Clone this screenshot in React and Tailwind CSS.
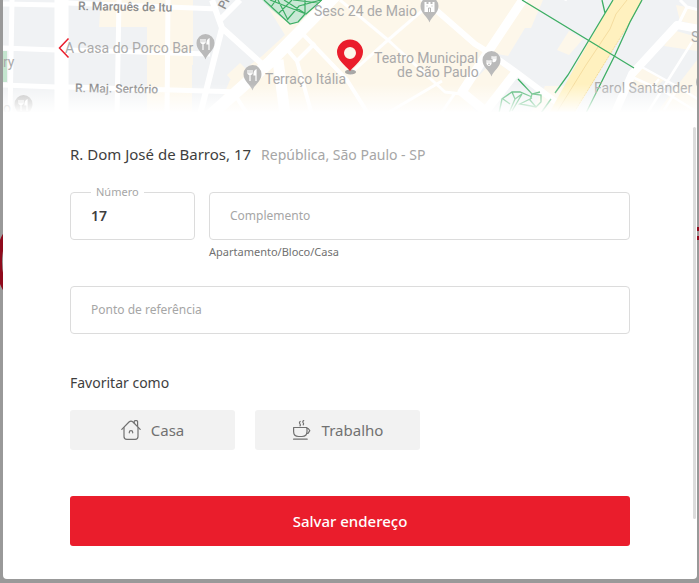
import { useState } from "react";

function PlacePin({ x, y, children }) {
  return (
    <g transform={`translate(${x} ${y})`}>
      <path d="M0 15.500C-1.500 10 -9 6.500 -9 -1A9 9 0 0 1 9 -1C9 6.500 1.500 10 0 15.500Z" fill="#bababa" />
      {children}
    </g>
  );
}

function Cutlery() {
  return (
    <g fill="none" stroke="#fff">
      <path d="M-4.500 -5v3.500q2 2 4 0V-5M-2.500 -5V6" strokeWidth="1.200" />
      <path d="M3.500 6V-5q-2 1 -2 5h2" fill="#fff" strokeWidth="1.200" />
    </g>
  );
}

function StreetMap() {
  return (
    <svg
      viewBox="3 0 694 115"
      preserveAspectRatio="xMidYMin slice"
      className="block h-[115px] w-full"
      role="img"
      aria-label="Mapa"
    >
      <defs>
        <linearGradient id="fade" x1="0" y1="0" x2="0" y2="1">
          <stop offset="0" stopColor="#fff" stopOpacity="0" />
          <stop offset="1" stopColor="#fff" />
        </linearGradient>
      </defs>
      <rect x="3" width="694" height="115" fill="#f0f2f4" />
      <path d="M3 51h4v31H3z" fill="#c4e5cf" />
      <g fill="#fdf7ea">
        <path d="M101 0H193V65h-1V115H147V27H99z" />
        <path d="M265 0H523L461 92L478 115H215L230 80L262 56L285 35L266 4z" />
        <path d="M227 75L240 63L246 69L232 81z" />
        <path d="M523 0H543L531 28L525 28L508 56L487 52z" />
        <path d="M494 60L512 73L484 107L463 92z" />
        <path d="M569 31L583 39L569 55L557 50z" />
        <path d="M530 115L545 86H590L575 115z" />
        <path d="M673 30L697 37V51L664 46z" />
        <path d="M638 66L664 80L650 92L630 85z" />
        <path d="M697 60V115H655L670 95z" />
        <path d="M676 5L697 9V25L680 21z" />
      </g>
      <path d="M262 0H322L298 23L290 24L272 10z" fill="#c9e8d5" />
      <g fill="none" stroke="#3dae64" strokeWidth="1.200">
        <path d="M264 0L290 24L298 22M271 7L276 0M279 13L292 0M287 20L299 6L321 0M270 0L306 14M284 0L306 14L322 0M305 0V14L298 22M293 0L319 3M278 0L288 20" />
      </g>
      <g fill="none" stroke="#fff" strokeLinejoin="round">
        <path d="M61.500 0V115" strokeWidth="14" />
        <path d="M12 0L10 115" strokeWidth="5" />
        <path d="M3 4L56 5M3 48L56 50M3 85L56 87" strokeWidth="5" />
        <path d="M68 3L218 9M68 50L210 54M68 87L240 92M119 0L117 115M168 0L167 115" strokeWidth="5" />
        <path d="M212 0L222 28L200 115M222 28L262 64M220 20L240 0" strokeWidth="6" />
        <path d="M205 120L270 62L335 -4" strokeWidth="12" />
        <path d="M278 60L285 115" strokeWidth="11" />
        <path d="M284 46L297 61L312 115M297 61L315 43M300 31L347 80L369 115M237 98L248 115" strokeWidth="4" />
        <path d="M340 0L388 40L445 92L461 94M430 4L388 40L350 74M384 115L442 81M455 93L440 115" strokeWidth="3" />
        <path d="M420 -4L475 44L488 52L516 72L560 105" strokeWidth="6" />
        <path d="M526 -5L488 52L462 92L484 110M516 72L484 113" strokeWidth="9" />
        <path d="M699 29L677 25L632 74L614 115" strokeWidth="8" />
        <path d="M678 25L687 7L680 0M687 7L699 10M555 -6L567 0" strokeWidth="3" />
        <path d="M640 66L680 88L699 100M630 76L665 92L697 112M692 42L660 93L648 112M659 79L650 90M678 88L664 110" strokeWidth="2.500" />
      </g>
      <path d="M613 0H642L630 22L573 115H548L590 40z" fill="#fff1bf" />
      <path d="M627 0L616 14L610 29L586 65L555 115" fill="none" stroke="#f5dda0" />
      <path d="M641 2L630 22L573 114" fill="none" stroke="#f3dc9b" strokeDasharray="2 1" />
      <g fill="none" stroke="#3dae64" strokeWidth="1.300">
        <path d="M522 0L634 68M613 0L589 40L568 75L555 93M602 0L605 13M642 0L630 22L615 55L586 113M551 99L541 113" />
        <path d="M518 79L532 94L541 95V102L536 107L530 100L532 94L540 92M532 97L520 92L512 92L502 99L499 113M512 92L515 99L522 94M515 99L509 113M522 94L512 111M503 99L510 104M532 98L520 104L536 107" />
      </g>
      <g fontFamily="Roboto, sans-serif" fontSize="14" fill="#aaa">
        <g fontWeight="500" fontSize="12" fill="#8c8c8c">
          <text x="78" y="10" transform="rotate(1 78 10)">R. Marquês de Itu</text>
          <text x="75" y="92" transform="rotate(1 75 92)">R. Maj. Sertório</text>
          <text x="225" y="10" transform="rotate(-62 225 10)">Pr</text>
        </g>
        <text x="65" y="53">A Casa do Porco Bar</text>
        <text x="3" y="67">ry</text>
        <text x="3" y="113">o</text>
        <text x="314" y="16">Sesc 24 de Maio</text>
        <text x="265" y="84">Terraço Itália</text>
        <text x="374" y="63">Teatro Municipal</text>
        <text x="397" y="77">de São Paulo</text>
        <text x="594" y="93">Farol Santander</text>
        <text x="691" y="42">S</text>
      </g>
      <PlacePin x={205.500} y={44}><Cutlery /></PlacePin>
      <PlacePin x={23.500} y={105}><Cutlery /></PlacePin>
      <PlacePin x={252.500} y={75}><Cutlery /></PlacePin>
      <PlacePin x={429.500} y={7}>
        <path d="M-5 -5h2v2h2v-2h2v2h2v-2h2v10h-10z" fill="#fff" />
        <path d="M-1 5V1h2v4M-3 -1h1M2 -1h1" stroke="#b8b8b8" fill="none" />
      </PlacePin>
      <PlacePin x={491.500} y={61}>
        <path d="M-5 -1q2.500 1 5 0v4q-2.500 4 -5 0zM0 -5q2.500 1 5 0v4q-1 3 -4 2v-3h-1z" fill="#fff" />
        <path d="M-4 1h1M-2 1h1M1 -3h1M3 -3h1M-3.500 3q1 1 2 0" stroke="#b8b8b8" fill="none" />
      </PlacePin>
      <PlacePin x={705} y={83} />
      <rect x="3" y="84" width="694" height="29" fill="url(#fade)" />
      <rect x="3" y="112" width="694" height="3" fill="#fff" />
      <ellipse cx="350.500" cy="72" rx="5.500" ry="2.500" fill="#8b8b8b" fillOpacity=".75" />
      <path
        d="M350 71C345 65 337 60 337 52A13 12.500 0 0 1 363 52C363 60 355 65 350 71ZM350 47A6 6 0 1 0 350 59A6 6 0 1 0 350 47Z"
        fill="#ea1d2c"
        fillRule="evenodd"
      />
    </svg>
  );
}

function HouseIcon() {
  return (
    <svg viewBox="0 0 20 20" className="size-5" fill="none" stroke="#717171" strokeWidth="1.200" strokeLinecap="round" strokeLinejoin="round" aria-hidden="true">
      <path d="M.8 9.300L8 2Q10 .3 12 2L19.200 9.300" />
      <path d="M3 7.500v9Q3 19.300 5.800 19.300h8.400Q17 19.300 17 16.500v-9" />
      <path d="M13.200 3V1.500q0-.9.9-.9h1.600q.9 0 .9.900v5" />
      <path d="M8.300 12.800v-.5q0-1.600 1.700-1.600t1.700 1.600v.5" />
    </svg>
  );
}

function CupIcon() {
  return (
    <svg viewBox="0 0 20 20" className="size-5" fill="none" stroke="#717171" strokeWidth="1.200" strokeLinecap="round" strokeLinejoin="round" aria-hidden="true">
      <path d="M1.600 7.500H15v4q0 5-5 5H6.600q-5 0-5-5z" />
      <path d="M15 8.500h1.200l1.600 2.200-1.800 2.700H14.600" />
      <path d="M1.600 19.200h13.600" />
      <path d="M8 5.800Q8.800 4.900 7.800 3.600Q7 2.300 8.200 1.500M11.200 4.800Q12 3.600 11 2.600Q10.400 1.400 11.700.6" />
    </svg>
  );
}

function FavoriteButton({ icon, label, selected, onClick }) {
  return (
    <button
      type="button"
      aria-pressed={selected}
      onClick={onClick}
      className="flex h-10 w-[165px] items-center justify-center gap-2.5 rounded-[3px] bg-[#f2f2f2] text-[15px] text-[#717171]"
    >
      {icon}
      {label}
    </button>
  );
}

export default function App() {
  const [favorite, setFavorite] = useState("");
  const inputStyle =
    "h-12 w-full rounded-sm border border-[#dcdcdc] bg-white px-5 pb-0.5 outline-none placeholder:text-[#a6a6a6]";

  return (
    <div className="relative min-h-screen overflow-hidden bg-[#999] pr-0.5 pb-1 pl-[3px] font-['Noto_Sans',sans-serif] text-[#3e3e3e]">
      <div className="absolute top-[222px] -left-1 h-20 w-12 rounded-[50%] border-6 border-[#8f0a1c]" />
      <div className="absolute top-[227px] right-0 h-[13px] w-1 border-y-4 border-[#8f0a1c]" />
      <main role="dialog" aria-label="Endereço" className="relative overflow-hidden rounded-b bg-white">
        <StreetMap />
        <button type="button" aria-label="Voltar" className="absolute top-9 left-[54px] text-[#ea1d2c]">
          <svg viewBox="0 0 14 24" className="h-6 w-3.5" fill="none" stroke="currentColor" strokeWidth="1.500" aria-hidden="true">
            <path d="M11.500 2.500L2.500 12l9 9.500" />
          </svg>
        </button>
        <div className="absolute top-[127px] right-px h-[392px] w-[3px] rounded-full bg-[#dcdcdc]" />

        <form className="px-[67px] pt-[27px] pb-[33px]" onSubmit={(e) => e.preventDefault()}>
          <h1 className="flex items-baseline gap-2.5 text-[15px] leading-6">
            R. Dom José de Barros, 17
            <span className="text-[14px] leading-5 text-[#a6a6a6]">República, São Paulo - SP</span>
          </h1>

          <div className="mt-[26px] flex gap-3.5">
            <div className="relative w-[125px] shrink-0">
              <label htmlFor="numero" className="absolute -top-2 left-[21px] bg-white px-[5px] text-[11px] leading-4 text-[#a6a6a6]">
                Número
              </label>
              <input id="numero" defaultValue="17" className={`${inputStyle} text-[14px] font-semibold`} />
            </div>
            <div className="min-w-0 grow">
              <input id="complemento" placeholder="Complemento" className={`${inputStyle} text-[12px]`} />
              <label htmlFor="complemento" className="mt-1 block text-[11px] leading-4 text-[#717171]">
                Apartamento/Bloco/Casa
              </label>
            </div>
          </div>

          <input aria-label="Ponto de referência" placeholder="Ponto de referência" className={`${inputStyle} mt-[26px] text-[12px]`} />

          <fieldset className="mt-[39px]">
            <legend className="text-[14px] leading-5">Favoritar como</legend>
            <div className="mt-[17px] flex gap-5">
              <FavoriteButton icon={<HouseIcon />} label="Casa" selected={favorite === "casa"} onClick={() => setFavorite("casa")} />
              <FavoriteButton icon={<CupIcon />} label="Trabalho" selected={favorite === "trabalho"} onClick={() => setFavorite("trabalho")} />
            </div>
          </fieldset>

          <button type="submit" className="mt-[46px] h-[50px] w-full rounded-[3px] bg-[#ea1d2c] text-[15px] font-medium text-white">
            Salvar endereço
          </button>
        </form>
      </main>
    </div>
  );
}
